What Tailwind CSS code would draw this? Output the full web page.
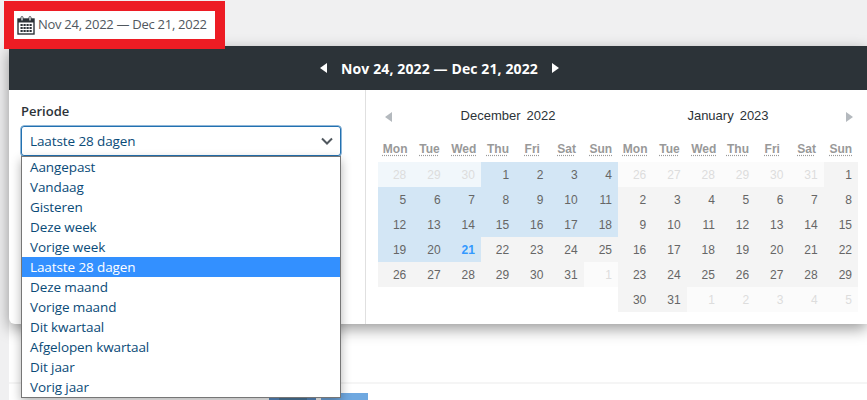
<!DOCTYPE html>
<html lang="en">
<head>
  <meta charset="UTF-8" />
  <title>Periode</title>
  <script src="https://cdn.jsdelivr.net/npm/@tailwindcss/browser@4"></script>
</head>
<body class="bg-[#f0f0f1] h-[400px] w-[867px] overflow-hidden relative font-['Open_Sans',sans-serif]">

  <!-- Date trigger, with the red marker round it -->
  <div class="absolute left-[4px] top-[1px] z-20 w-[221px] h-[48px] border-[10px] border-[#ed1c24] bg-white flex items-center pl-[3px] gap-[3px] text-[13px] tracking-[-0.28px] text-[#50575e]">
    <svg width="18" height="19" viewBox="0 0 18 19" class="shrink-0">
      <rect x="1" y="3" width="16" height="15" fill="none" stroke="#2c3338" stroke-width="1.4"/>
      <rect x="1" y="3" width="16" height="3.5" fill="#2c3338"/>
      <rect x="4" y="0.5" width="2" height="4.5" rx="1" fill="#fff" stroke="#2c3338" stroke-width="0.8"/>
      <rect x="12" y="0.5" width="2" height="4.5" rx="1" fill="#fff" stroke="#2c3338" stroke-width="0.8"/>
      <g fill="#2c3338">
        <rect x="3.5" y="8" width="2.2" height="2"/><rect x="6.5" y="8" width="2.2" height="2"/><rect x="9.5" y="8" width="2.2" height="2"/><rect x="12.5" y="8" width="2.2" height="2"/>
        <rect x="3.5" y="11" width="2.2" height="2"/><rect x="6.5" y="11" width="2.2" height="2"/><rect x="9.5" y="11" width="2.2" height="2"/><rect x="12.5" y="11" width="2.2" height="2"/>
        <rect x="3.5" y="14" width="2.2" height="2"/><rect x="6.5" y="14" width="2.2" height="2"/><rect x="9.5" y="14" width="2.2" height="2"/><rect x="12.5" y="14" width="2.2" height="2"/>
      </g>
    </svg>
    <span>Nov 24, 2022 — Dec 21, 2022</span>
  </div>

  <!-- Card behind the popover -->
  <div class="absolute left-[9px] right-0 top-[60px] bottom-0 bg-white">
    <div class="mt-[322px] h-[2px] bg-[#f5f5f5]"></div>
    <div class="mt-[9px] ml-[260px] flex gap-[5px]">
      <div class="w-[47px] h-[8px] bg-[#5b8dc4] pl-[10px]"><div class="w-[28px] h-[8px] bg-[#4d7a9f]"></div></div>
      <div class="w-[47px] h-[8px] bg-[#6fa8e0]"></div>
    </div>
  </div>

  <!-- Popover -->
  <div class="absolute left-[9px] right-0 top-[46px] h-[278px] z-10 bg-white rounded-bl-[6px] shadow-[0_5px_15px_rgba(0,0,0,0.4)]">
    <div class="h-[44px] bg-[#2c3338] flex items-center justify-center gap-[14px] text-white font-bold text-[14px] tracking-[0.12px] pl-[3px]">
      <svg width="7" height="10" viewBox="0 0 7 10"><path d="M7 0v10L0 5z" fill="#fff"/></svg>
      <span>Nov 24, 2022 — Dec 21, 2022</span>
      <svg width="7" height="10" viewBox="0 0 7 10"><path d="M0 0v10l7-5z" fill="#fff"/></svg>
    </div>

    <div class="flex h-[234px]">
      <!-- Period select -->
      <div class="w-[357px] border-r border-[#e0e0e0] pl-[12px] pt-[12px] relative">
        <div class="text-[13px] font-semibold text-[#2c3338] leading-[18px] mb-[6px]">Periode</div>
        <div class="w-[320px] h-[30px] rounded-[3px] border border-[#2271b1] shadow-[0_0_0_0.5px_#2271b1] flex items-center justify-between pl-[8px] pr-[6px] text-[13.5px] tracking-[-0.1px] text-[#0a4b78]">
          <span>Laatste 28 dagen</span>
          <svg width="14" height="9" viewBox="0 0 14 9"><path d="M2 1.5l5 5 5-5" fill="none" stroke="#50575e" stroke-width="2"/></svg>
        </div>
        <ul class="absolute z-30 left-[12px] top-[66px] w-[320px] border border-[#767676] bg-white text-[13.5px] tracking-[-0.1px] leading-[20px] text-[#0a4b78] shadow-[0_4px_10px_rgba(0,0,0,0.3)]">
          <li class="pl-[8px] h-[20px]">Aangepast</li>
          <li class="pl-[8px] h-[20px]">Vandaag</li>
          <li class="pl-[8px] h-[20px]">Gisteren</li>
          <li class="pl-[8px] h-[20px]">Deze week</li>
          <li class="pl-[8px] h-[20px]">Vorige week</li>
          <li class="pl-[8px] h-[20px] bg-[#3390ff] text-white">Laatste 28 dagen</li>
          <li class="pl-[8px] h-[20px]">Deze maand</li>
          <li class="pl-[8px] h-[20px]">Vorige maand</li>
          <li class="pl-[8px] h-[20px]">Dit kwartaal</li>
          <li class="pl-[8px] h-[20px]">Afgelopen kwartaal</li>
          <li class="pl-[8px] h-[20px]">Dit jaar</li>
          <li class="pl-[8px] h-[20px]">Vorig jaar</li>
        </ul>
      </div>

      <!-- Calendars -->
      <div class="flex pl-[12px] font-['Liberation_Sans',sans-serif]">
        <div class="w-[240px]">
          <div class="h-[46px] flex items-center relative text-[13px] text-[#2c3338] justify-center gap-[6px] pl-[20px] pt-[6px]">
            <svg class="absolute left-[7px] top-[22px]" width="7" height="10" viewBox="0 0 7 10"><path d="M7 0v10L0 5z" fill="#b4b9be"/></svg>
            <span>December</span><span>2022</span>
          </div>
          <div id="head-left" class="grid grid-cols-7 h-[26px] items-center"></div>
          <div id="days-left" class="grid grid-cols-7"></div>
        </div>
        <div class="w-[240px]">
          <div class="h-[46px] flex items-center relative text-[13px] text-[#2c3338] justify-center gap-[6px] pr-[20px] pt-[6px]">
            <svg class="absolute right-[5px] top-[22px]" width="7" height="10" viewBox="0 0 7 10"><path d="M0 0v10l7-5z" fill="#b4b9be"/></svg>
            <span>January</span><span>2023</span>
          </div>
          <div id="head-right" class="grid grid-cols-7 h-[26px] items-center"></div>
          <div id="days-right" class="grid grid-cols-7"></div>
        </div>
      </div>
    </div>
  </div>

  <script>
    const styles = {
      r: 'bg-[#d3e6f5] text-[#666]',
      f: 'bg-[#f1f7fb] text-[#ddd]',
      g: 'bg-[#f4f4f4] text-[#666]',
      o: 'bg-[#fbfbfb] text-[#ddd]',
      t: 'bg-[#d3e6f5] text-[#3399ff] font-bold'
    };
    const weekdays = ['Mon', 'Tue', 'Wed', 'Thu', 'Fri', 'Sat', 'Sun'];

    function fillHead(id) {
      document.getElementById(id).innerHTML = weekdays.map(d =>
        `<div class="text-center text-[12px] font-bold text-[#999]"><abbr class="underline decoration-dotted underline-offset-[2px]">${d}</abbr></div>`
      ).join('');
    }

    function fillDays(id, days) {
      document.getElementById(id).innerHTML = days.map(([n, s]) =>
        `<div class="h-[25px] flex items-center justify-end pr-[6px] text-[12px] ${styles[s]}">${n}</div>`
      ).join('');
    }

    const range = (from, to, s) => Array.from({ length: to - from + 1 }, (_, i) => [from + i, s]);

    fillHead('head-left');
    fillHead('head-right');
    fillDays('days-left', [
      ...range(28, 30, 'f'), ...range(1, 20, 'r'), [21, 't'], ...range(22, 31, 'g'), [1, 'o']
    ]);
    fillDays('days-right', [
      ...range(26, 31, 'o'), ...range(1, 31, 'g'), ...range(1, 5, 'o')
    ]);
  </script>
</body>
</html>
